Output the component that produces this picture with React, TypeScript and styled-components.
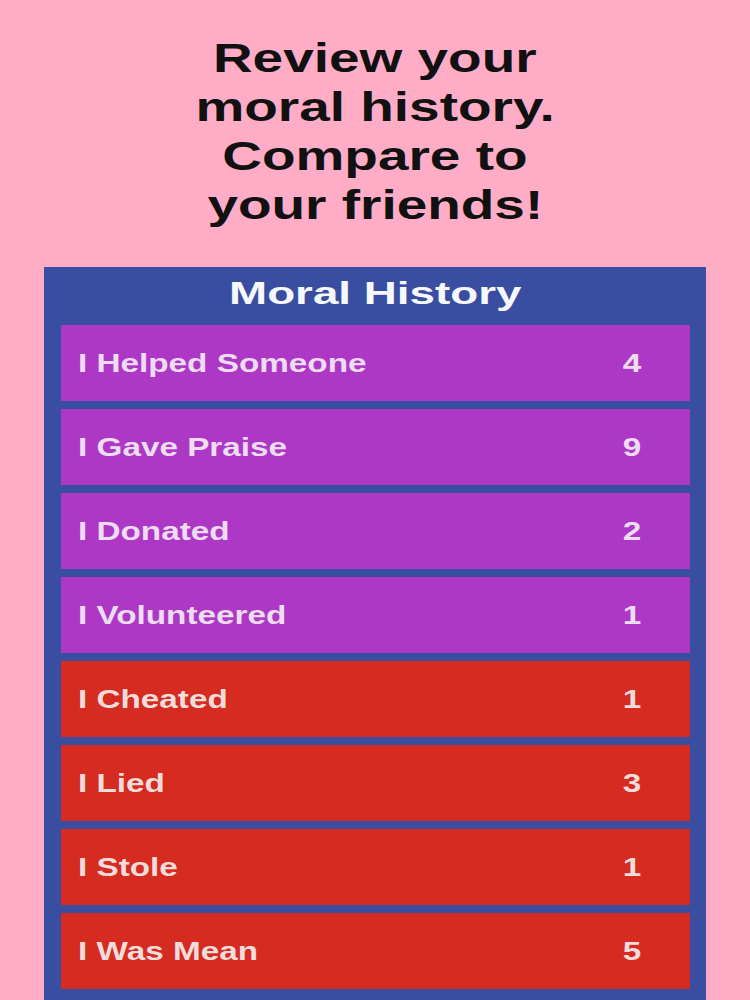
import React from "react";
import styled, { createGlobalStyle } from "styled-components";

const GlobalStyle = createGlobalStyle`
  html, body {
    margin: 0;
    padding: 0;
    background: #ffadc7;
  }
  body {
    font-family: "Liberation Sans", Arial, sans-serif;
    height: 1000px;
    overflow: hidden;
  }
`;

const Page = styled.main`
  display: flex;
  flex-direction: column;
  align-items: center;
  min-height: 1000px;
  background: #ffadc7;
  padding-top: 34px;
  box-sizing: border-box;
`;

const Headline = styled.h1`
  margin: 0;
  display: flex;
  flex-direction: column;
  align-items: center;
  font-family: "Liberation Sans", Arial, sans-serif;
  font-weight: 700;
  font-size: 41px;
  line-height: 49px;
  color: #111111;
`;

const HeadLine = styled.span`
  display: inline-block;
  white-space: nowrap;
  transform: scaleX(1.34);
  transform-origin: center;
`;

const Panel = styled.section`
  margin-top: 37px;
  width: 662px;
  box-sizing: border-box;
  background: #394ea0;
  padding: 6px 16px 16px 17px;
  display: flex;
  flex-direction: column;
`;

const PanelTitle = styled.h2`
  margin: 0 0 12px;
  text-align: center;
  font-family: "Liberation Sans", Arial, sans-serif;
  font-weight: 700;
  font-size: 32px;
  line-height: 40px;
  color: #f7f8fc;
`;

const TitleText = styled.span`
  display: inline-block;
  transform: scaleX(1.43);
  transform-origin: center;
`;

const List = styled.ul`
  list-style: none;
  margin: 0;
  padding: 0;
  display: flex;
  flex-direction: column;
  gap: 8px;
`;

const Row = styled.li<{ $kind: "good" | "bad" }>`
  height: 76px;
  display: flex;
  align-items: center;
  padding-left: 17px;
  padding-right: 28px;
  background: ${(p) => (p.$kind === "good" ? "#ad38c5" : "#d52b20")};
  color: ${(p) => (p.$kind === "good" ? "#eedcf2" : "#f1dcdc")};
  font-family: "Liberation Sans", Arial, sans-serif;
  font-weight: 700;
  font-size: 26px;
`;

const Label = styled.span`
  flex: 1;
  display: inline-block;
  white-space: nowrap;
  transform: scaleX(1.28);
  transform-origin: left center;
`;

const Count = styled.span`
  width: 60px;
  text-align: center;
  display: inline-block;
  transform: scaleX(1.28);
  transform-origin: center;
`;

type Entry = { label: string; count: number; kind: "good" | "bad" };

const entries: Entry[] = [
  { label: "I Helped Someone", count: 4, kind: "good" },
  { label: "I Gave Praise", count: 9, kind: "good" },
  { label: "I Donated", count: 2, kind: "good" },
  { label: "I Volunteered", count: 1, kind: "good" },
  { label: "I Cheated", count: 1, kind: "bad" },
  { label: "I Lied", count: 3, kind: "bad" },
  { label: "I Stole", count: 1, kind: "bad" },
  { label: "I Was Mean", count: 5, kind: "bad" },
];

export default function App() {
  return (
    <>
      <GlobalStyle />
      <Page>
        <Headline>
          <HeadLine>Review your</HeadLine>
          <HeadLine>moral history.</HeadLine>
          <HeadLine>Compare to</HeadLine>
          <HeadLine>your friends!</HeadLine>
        </Headline>
        <Panel>
          <PanelTitle>
            <TitleText>Moral History</TitleText>
          </PanelTitle>
          <List>
            {entries.map((e) => (
              <Row key={e.label} $kind={e.kind}>
                <Label>{e.label}</Label>
                <Count>{e.count}</Count>
              </Row>
            ))}
          </List>
        </Panel>
      </Page>
    </>
  );
}
